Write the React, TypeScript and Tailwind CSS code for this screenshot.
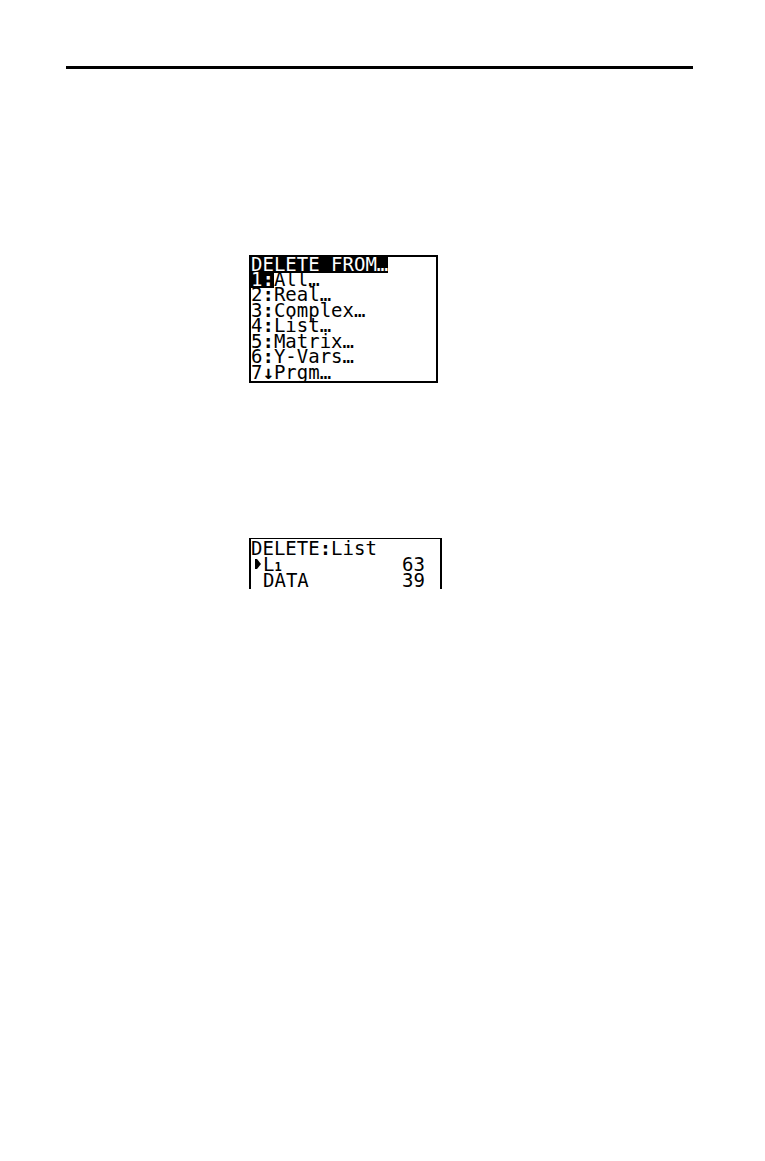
const menu = [
  { digit: "1", sign: ":", label: "All…", selected: true },
  { digit: "2", sign: ":", label: "Real…" },
  { digit: "3", sign: ":", label: "Complex…" },
  { digit: "4", sign: ":", label: "List…" },
  { digit: "5", sign: ":", label: "Matrix…" },
  { digit: "6", sign: ":", label: "Y-Vars…" },
  { digit: "7", sign: "↓", label: "Prgm…" },
];

const lists = [
  { name: "L", index: "1", size: 63, current: true },
  { name: "DATA", size: 39 },
];

function DeleteMenu() {
  return (
    <section className="w-[189px] border-2 border-black">
      <h1 className="w-fit bg-black pb-0.5 leading-[14px] text-white">DELETE FROM…</h1>
      <ul className="grid h-[108px] grid-rows-7">
        {menu.map((item) => (
          <li key={item.digit} className="flex min-h-0">
            <button type="button" className="flex text-left leading-[13px]">
              <span className={item.selected ? "bg-black pb-0.5 text-white" : "pb-0.5"}>
                {item.digit}
                <b>{item.sign}</b>
              </span>
              <span>{item.label}</span>
            </button>
          </li>
        ))}
      </ul>
    </section>
  );
}

function ListTable() {
  return (
    <section className="w-[193px] border-x-2 border-t border-black pt-px pb-px">
      <table className="w-full border-collapse leading-4">
        <caption className="text-left">
          DELETE<b>:</b>List
        </caption>
        <tbody>
          {lists.map((row) => (
            <tr key={row.name} className="h-4 align-top">
              <td className="w-3 p-0">
                {row.current && (
                  <svg viewBox="0 0 6 10" className="mt-[3px] ml-1 h-[10px] w-[6px]" aria-hidden="true">
                    <path d="M0 0h2l4 5-4 5H0z" fill="currentColor" />
                  </svg>
                )}
              </td>
              <td className="p-0">
                {row.name}
                {row.index && <span className="text-xs leading-0 font-bold">{row.index}</span>}
              </td>
              <td className="p-0 pr-[15px] text-right">{row.size}</td>
            </tr>
          ))}
        </tbody>
      </table>
    </section>
  );
}

export default function App() {
  return (
    <main className="min-h-screen bg-white pt-[66px] pr-[72px] pl-[66px] font-['DejaVu_Sans_Mono',monospace] text-[19px] text-black">
      <hr className="border-0 border-t-3 border-black" />
      <div className="flex flex-col gap-[155px] pt-[186px] pl-[183px]">
        <DeleteMenu />
        <ListTable />
      </div>
    </main>
  );
}
